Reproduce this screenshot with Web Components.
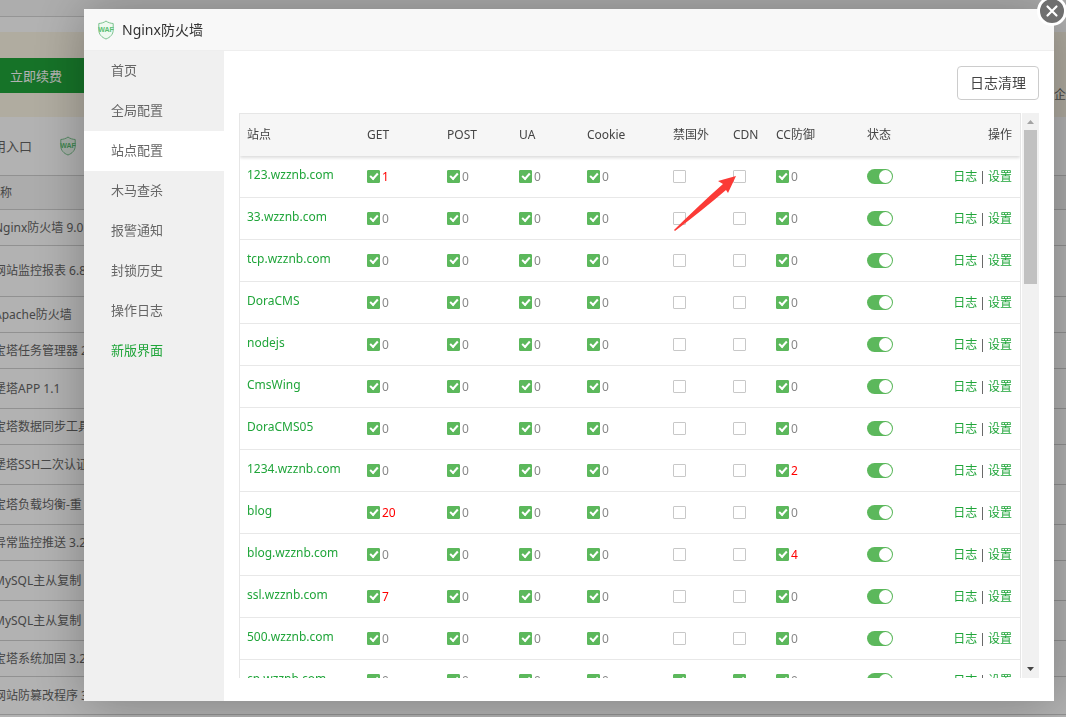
<!DOCTYPE html>
<html lang="zh-CN">
<head>
<meta charset="utf-8">
<meta name="viewport" content="width=device-width, initial-scale=1">
<title>Nginx防火墙</title>
<style>
  html, body { height: 100%; }
  body {
    margin: 0;
    overflow: hidden;
    background: #fff;
    color: #555;
    font: 12px/18px "Noto Sans", "Noto Sans CJK SC", sans-serif;
    --green: #20a53a;
  }
</style>
</head>
<body>
<panel-page></panel-page>
<modal-layer>
  <waf-icon slot="icon"></waf-icon>
  <span slot="title">Nginx防火墙</span>
  <side-menu slot="menu"></side-menu>
  <tool-button>日志清理</tool-button>
  <site-table></site-table>
</modal-layer>

<script>
const define = (name, html, setup) => {
  const template = document.createElement('template');
  template.innerHTML = html;
  customElements.define(name, class extends HTMLElement {
    constructor() {
      super();
      this.attachShadow({ mode: 'open' }).append(template.content.cloneNode(true));
    }
    connectedCallback() {
      if (setup && !this.ready) { this.ready = true; setup(this, this.shadowRoot); }
    }
  });
};

define('waf-icon', `
  <style>
    :host { display: block; width: 18px; height: 20px; }
    svg { display: block; width: 100%; height: 100%; }
    text { font: bold 7px "Liberation Sans", sans-serif; }
  </style>
  <svg viewBox="0 0 18 20" aria-hidden="true">
    <path d="M9 1 C7 2.6 4.5 3.3 1.8 3.5 V10 C1.8 14.4 4.8 17.4 9 19 C13.2 17.4 16.2 14.4 16.2 10 V3.5 C13.5 3.3 11 2.6 9 1Z" fill="#effaf1" stroke="#7cc490" stroke-width="1"/>
    <text x="9" y="12" text-anchor="middle" fill="#5cc074">WAF</text>
  </svg>`);

/* Software list behind the dialog */
define('panel-page', `
  <style>
    :host { display: block; height: 100%; overflow: hidden; color: #666; }
    .top { height: 16px; background: #f8f8f8; border-bottom: 1px solid #d6d6d6; }
    .gap { height: 15px; }
    .notice { display: flex; justify-content: space-between; align-items: flex-start; height: 85px; padding-top: 26px; box-sizing: border-box; background: #fcf6e6; }
    button { width: 96px; height: 35px; padding: 0 0 0 10px; border: 0; background: var(--green); color: #fff; font: inherit; font-size: 13px; text-align: left; }
    .notice span { padding-top: 28px; }
    .entry { display: flex; align-items: center; gap: 27px; height: 58px; margin-left: -7px; font-size: 13px; }
    table { width: 100%; border-collapse: separate; border-spacing: 0; }
    th, td { box-sizing: border-box; padding: 0; border-bottom: 1px solid #d0d0d0; text-align: left; font-weight: normal; white-space: nowrap; }
    th { height: 35px; background: #f6f6f6; border-top: 1px solid #d0d0d0; }
    td span { margin-left: -6px; }
  </style>
  <div class="top"></div>
  <div class="gap"></div>
  <div class="notice"><button type="button">立即续费</button><span>企</span></div>
  <div class="entry"><span>用入口</span><waf-icon></waf-icon></div>
  <table><thead><tr><th scope="col">称</th></tr></thead><tbody></tbody></table>
`, (host, root) => {
  const rows = [
    ['Nginx防火墙 9.0', 36], ['网站监控报表 6.8', 51], ['Apache防火墙', 36], ['宝塔任务管理器 2', 36],
    ['堡塔APP 1.1', 40], ['宝塔数据同步工具', 36], ['堡塔SSH二次认证', 40], ['宝塔负载均衡-重', 40],
    ['异常监控推送 3.2', 36], ['MySQL主从复制', 40], ['MySQL主从复制', 40], ['宝塔系统加固 3.2', 36],
    ['网站防篡改程序 3', 38], ['', 40]
  ];
  root.querySelector('tbody').innerHTML = rows
    .map(([name, h]) => `<tr><td style="height:${h}px"><span>${name}</span></td></tr>`).join('');
});

define('modal-layer', `
  <style>
    :host { position: fixed; inset: 0; display: grid; padding: 9px 12px 16px 84px; background: rgba(0,0,0,.3); }
    section { position: relative; display: grid; grid-template: 42px minmax(0, 1fr) / 140px minmax(0, 1fr); min-height: 0; background: #fff; box-shadow: 1px 1px 50px rgba(0,0,0,.3); }
    header { grid-column: 1 / -1; display: flex; align-items: center; gap: 7px; padding-left: 13px; box-sizing: border-box; background: #f8f8f8; border-bottom: 1px solid #eee; color: #333; font-size: 14px; }
    h1 { margin: 0; font: inherit; }
    main { display: flex; flex-direction: column; gap: 13px; min-height: 0; padding: 15px 15px 23px; }
    .close { position: absolute; top: -13px; right: -13px; width: 30px; height: 30px; padding: 0; border: 3px solid #fff; border-radius: 50%; background: #6f6f6f; }
    .close svg { display: block; width: 24px; height: 24px; }
  </style>
  <section role="dialog" aria-modal="true" aria-labelledby="t">
    <header><slot name="icon"></slot><h1 id="t"><slot name="title"></slot></h1></header>
    <slot name="menu"></slot>
    <main><slot></slot></main>
    <button class="close" type="button" aria-label="关闭">
      <svg viewBox="0 0 24 24"><path d="M7.5 7.5L16.5 16.5M16.5 7.5L7.5 16.5" stroke="#fff" stroke-width="2.2" stroke-linecap="round"/></svg>
    </button>
  </section>`);

define('side-menu', `
  <style>
    :host { display: block; background: #f0f0f0; font-size: 13px; }
    a { display: block; height: 40px; padding-left: 27px; color: #666; line-height: 38px; text-decoration: none; }
    a[aria-current] { background: #fff; }
    a.new { color: var(--green); }
  </style>
  <nav>
    <a href="#home">首页</a>
    <a href="#global">全局配置</a>
    <a href="#sites" aria-current="page">站点配置</a>
    <a href="#trojan">木马查杀</a>
    <a href="#alarm">报警通知</a>
    <a href="#block">封锁历史</a>
    <a href="#logs">操作日志</a>
    <a href="#new" class="new">新版界面</a>
  </nav>`);

define('tool-button', `
  <style>
    :host { display: block; align-self: flex-end; }
    button { display: block; height: 34px; padding: 0 12px; border: 1px solid #ccc; border-radius: 4px; background: #fff; color: #444; font: inherit; font-size: 14px; }
  </style>
  <button type="button"><slot></slot></button>`);

/* Rule tick box followed by its hit counter */
define('rule-check', `
  <style>
    :host { display: block; }
    label { display: flex; align-items: center; gap: 2px; height: 18px; color: #888; }
    input { appearance: none; position: relative; width: 13px; height: 13px; margin: 0; box-sizing: border-box; border: 1px solid #c8c8c8; border-radius: 1px; background: #fff; }
    input:checked { border-color: #5cb85c; background: #5cb85c; }
    input:checked::after { content: ""; position: absolute; left: 2px; top: 2px; width: 6px; height: 3px; border: solid #fff; border-width: 0 0 2px 2px; transform: rotate(-48deg); }
    .hit { color: #f00; }
  </style>
  <label><input type="checkbox"><span></span></label>
`, (host, root) => {
  const input = root.querySelector('input'), count = root.querySelector('span');
  input.checked = host.hasAttribute('on');
  input.setAttribute('aria-label', host.getAttribute('name'));
  const value = host.getAttribute('count');
  if (value === null) count.remove();
  else { count.textContent = value; count.classList.toggle('hit', value !== '0'); }
});

define('state-switch', `
  <style>
    :host { display: block; }
    input { appearance: none; display: block; position: relative; width: 26px; height: 15px; margin: 0; border-radius: 8px; background: #ccc; }
    input:checked { background: #5cb85c; }
    input::after { content: ""; position: absolute; top: 1px; left: 1px; width: 13px; height: 13px; border-radius: 50%; background: #fff; }
    input:checked::after { left: 12px; }
  </style>
  <input type="checkbox" role="switch" checked aria-label="状态">`);

define('scroll-rail', `
  <style>
    :host { display: flex; flex-direction: column; align-items: center; background: #f1f1f1; }
    svg { display: block; width: 17px; height: 17px; flex: none; }
    .track { flex: 1; width: 13px; }
    .thumb { height: 29%; background: #c1c1c1; }
  </style>
  <svg viewBox="0 0 17 17"><path d="M5 11L8.5 7L12 11Z" fill="#a3a3a3"/></svg>
  <div class="track"><div class="thumb"></div></div>
  <svg viewBox="0 0 17 17"><path d="M5 6L8.5 10L12 6Z" fill="#444"/></svg>`);

define('site-table', `
  <style>
    :host { position: relative; display: grid; grid-template-columns: minmax(0, 1fr) 17px; gap: 1px; flex: 1; min-height: 0; }
    .pane { overflow: hidden; border: 1px solid #e6e6e6; border-width: 1px 1px 0; box-sizing: border-box; }
    table { width: 100%; table-layout: fixed; border-collapse: separate; border-spacing: 0; }
    thead { position: sticky; top: 0; z-index: 1; background: #f6f6f6; color: #444; box-shadow: 0 2px 3px #ddd; }
    th, td { box-sizing: border-box; height: 42px; padding: 0 0 0 8px; text-align: left; font-weight: normal; white-space: nowrap; }
    td { border-bottom: 1px solid #e8e8e8; }
    th:last-child, td:last-child { padding: 0 8px 0 0; text-align: right; }
    th:first-child, td:first-child { padding-left: 7px; }
    td:first-child { padding-bottom: 4px; }
    a { color: var(--green); text-decoration: none; }
    i { margin: 0 2px; font-style: normal; }
    .arrow { position: absolute; z-index: 2; left: 434px; top: 62px; width: 64px; height: 58px; }
  </style>
  <div class="pane">
    <table>
      <colgroup></colgroup>
      <thead><tr></tr></thead>
      <tbody></tbody>
    </table>
  </div>
  <scroll-rail aria-hidden="true"></scroll-rail>
  <svg class="arrow" viewBox="0 0 64 58" aria-hidden="true"><path d="M63 1L45 6L50 9C33 24 17 39 1 55L2 56C20 42 37 29 53 15L55 18Z" fill="#fb3a36"/></svg>
`, (host, root) => {
  const heads = ['站点', 'GET', 'POST', 'UA', 'Cookie', '禁国外', 'CDN', 'CC防御', '状态', '操作'];
  const sites = [
    ['123.wzznb.com', 1, 0], ['33.wzznb.com', 0, 0], ['tcp.wzznb.com', 0, 0], ['DoraCMS', 0, 0],
    ['nodejs', 0, 0], ['CmsWing', 0, 0], ['DoraCMS05', 0, 0], ['1234.wzznb.com', 0, 2],
    ['blog', 20, 0], ['blog.wzznb.com', 0, 4], ['ssl.wzznb.com', 7, 0], ['500.wzznb.com', 0, 0],
    ['cp.wzznb.com', 0, 0, true]
  ];
  const widths = [119, 80, 72, 68, 86, 60, 43, 91, 80];
  root.querySelector('colgroup').innerHTML = widths.map(w => `<col style="width:${w}px">`).join('') + '<col>';
  root.querySelector('thead tr').innerHTML = heads.map(h => `<th scope="col">${h}</th>`).join('');
  const check = (name, on, count) =>
    `<td><rule-check name="${name}"${on ? ' on' : ''}${count === undefined ? '' : ` count="${count}"`}></rule-check></td>`;
  root.querySelector('tbody').innerHTML = sites.map(([site, get, cc, strict]) => `<tr>
    <td><a href="#site">${site}</a></td>
    ${check('GET', true, get)}${check('POST', true, 0)}${check('UA', true, 0)}${check('Cookie', true, 0)}
    ${check('禁国外', strict)}${check('CDN', strict)}${check('CC防御', true, cc)}
    <td><state-switch></state-switch></td>
    <td><a href="#log">日志</a><i>|</i><a href="#set">设置</a></td>
  </tr>`).join('');
});
</script>
</body>
</html>
